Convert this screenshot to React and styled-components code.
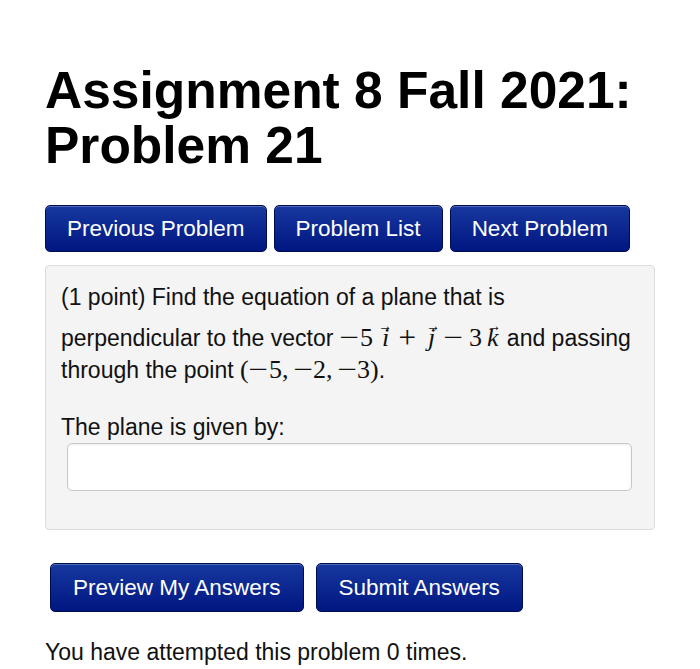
import React from "react";
import styled, { createGlobalStyle } from "styled-components";

const GlobalStyle = createGlobalStyle`
  body {
    margin: 0;
    background: #fff;
    font-family: "Liberation Sans", Arial, sans-serif;
    color: #111;
  }
`;

const Page = styled.div`
  padding: 63px 45px 0 45px;
`;

const Title = styled.h1`
  margin: 0;
  font-size: 51.5px;
  line-height: 55px;
  font-weight: bold;
  color: #000;
`;

const NavRow = styled.div`
  display: flex;
  gap: 7px;
  margin-top: 32px;
`;

const BlueButton = styled.button`
  height: ${(p) => p.$h || 47}px;
  padding: 0 ${(p) => p.$pad || 21}px;
  border: 1px solid #000c50;
  border-radius: 5px;
  background: linear-gradient(#17389f, #001681);
  color: #fff;
  font-family: "Liberation Sans", Arial, sans-serif;
  font-size: 22.5px;
  box-shadow: inset 0 1px 0 rgba(255, 255, 255, 0.25);
`;

const Panel = styled.div`
  margin-top: 13px;
  width: 610px;
  box-sizing: border-box;
  background: #f4f4f4;
  border: 1px solid #ddd;
  border-radius: 4px;
  padding: 15px 18px 38px 15px;
`;

const Problem = styled.p`
  margin: 0;
  font-size: 23px;
  line-height: 32px;
`;

const Math = styled.span`
  font-family: "Liberation Serif", "Times New Roman", serif;
  font-size: 26px;
  white-space: nowrap;
`;

const Op = styled.span`
  display: inline-block;
  width: 0.778em;
  text-align: center;
  margin: 0 ${(p) => (p.$bin ? "0.222em" : "0")};
`;

const Glyph = styled.span`
  display: inline-block;
  transform: scale(${(p) => p.$sx}, ${(p) => p.$sy || 1});
`;

const Vec = styled.span`
  position: relative;
  display: inline-block;
  font-style: italic;
  padding: 9px 2px 0 ${(p) => p.$left || 7}px;
  &::after {
    content: "→";
    position: absolute;
    left: 50%;
    top: -3px;
    transform: translateX(-30%) scaleX(0.85);
    font-size: 16px;
    font-style: normal;
  }
`;

const Comma = styled.span`
  margin-right: 0.167em;
`;

const Label = styled.p`
  margin: 25px 0 0 0;
  font-size: 23px;
  line-height: 32px;
`;

const AnswerInput = styled.input`
  display: block;
  margin: 0 0 0 6px;
  width: 565px;
  height: 48px;
  box-sizing: border-box;
  background: #fff;
  border: 1px solid #c8c8c8;
  border-radius: 5px;
  box-shadow: inset 0 1px 2px rgba(0, 0, 0, 0.08);
`;

const ActionRow = styled.div`
  display: flex;
  gap: 12px;
  margin: 33px 0 0 5px;
`;

const Attempts = styled.p`
  margin: 26px 0 0 0;
  font-size: 23px;
  line-height: 28px;
`;

const Minus = ({ bin }) => (
  <Op $bin={bin}>
    <Glyph $sx={1.35}>−</Glyph>
  </Op>
);

const Plus = () => (
  <Op $bin>
    <Glyph $sx={1.2} $sy={1.2}>+</Glyph>
  </Op>
);

export default function App() {
  return (
    <>
      <GlobalStyle />
      <Page>
        <Title>
          Assignment 8 Fall 2021:
          <br />
          Problem 21
        </Title>
        <NavRow>
          <BlueButton>Previous Problem</BlueButton>
          <BlueButton>Problem List</BlueButton>
          <BlueButton>Next Problem</BlueButton>
        </NavRow>
        <Panel>
          <Problem>
            (1 point) Find the equation of a plane that is perpendicular to the
            vector{" "}
            <Math>
              <Minus />5<Vec $left={9}>i</Vec>
              <Plus />
              <Vec $left={5}>j</Vec>
              <Minus bin />3<Vec $left={5}>k</Vec>
            </Math>{" "}
            and passing through the point{" "}
            <Math>
              (<Minus />5<Comma>,</Comma>
              <Minus />2<Comma>,</Comma>
              <Minus />3)
            </Math>
            .
          </Problem>
          <Label>The plane is given by:</Label>
          <AnswerInput type="text" />
        </Panel>
        <ActionRow>
          <BlueButton $h={49} $pad={22}>Preview My Answers</BlueButton>
          <BlueButton $h={49} $pad={22}>Submit Answers</BlueButton>
        </ActionRow>
        <Attempts>You have attempted this problem 0 times.</Attempts>
      </Page>
    </>
  );
}
